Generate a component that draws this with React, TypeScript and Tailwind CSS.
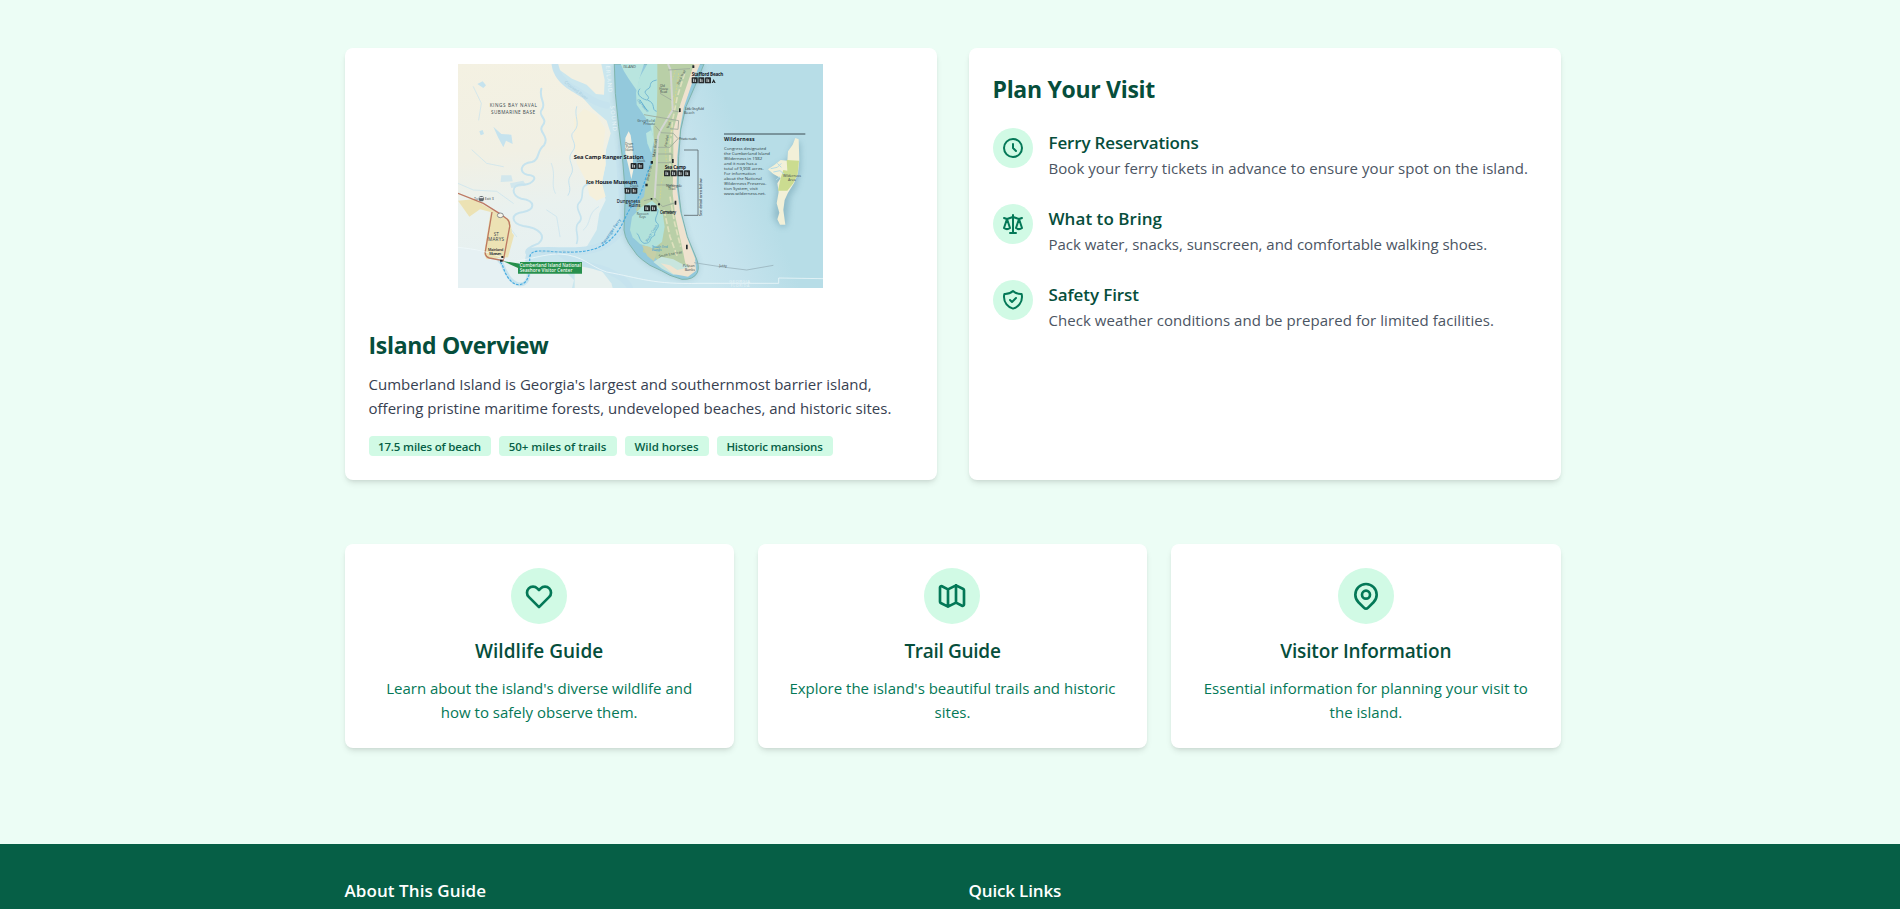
import React from "react";

function Icon({ paths, className }: { paths: string[]; className: string }) {
  return (
    <svg className={className} fill="none" viewBox="0 0 24 24" stroke="currentColor" strokeWidth={2} strokeLinecap="round" strokeLinejoin="round">
      {paths.map((d) => (
        <path key={d} d={d} />
      ))}
    </svg>
  );
}

const CLOCK = ["M12 8v4l3 3m6-3a9 9 0 11-18 0 9 9 0 0118 0z"];
const SCALE = [
  "M3 6l3 1m0 0l-3 9a5.002 5.002 0 006.001 0M6 7l3 9M6 7l6-2m6 2l3-1m-3 1l-3 9a5.002 5.002 0 006.001 0M18 7l3 9m-3-9l-6-2m0-2v2m0 16V5m0 16H9m3 0h3",
];
const SHIELD = [
  "M9 12l2 2 4-4m5.618-4.016A11.955 11.955 0 0112 2.944a11.955 11.955 0 01-8.618 3.04A12.02 12.02 0 003 9c0 5.591 3.824 10.29 9 11.622 5.176-1.332 9-6.03 9-11.622 0-1.042-.133-2.052-.382-3.016z",
];
const HEART = [
  "M4.318 6.318a4.5 4.5 0 000 6.364L12 20.364l7.682-7.682a4.5 4.5 0 00-6.364-6.364L12 7.636l-1.318-1.318a4.5 4.5 0 00-6.364 0z",
];
const MAP = [
  "M9 20l-5.447-2.724A1 1 0 013 16.382V5.618a1 1 0 011.447-.894L9 7m0 13l6-3m-6 3V7m6 10l4.553 2.276A1 1 0 0021 18.382V7.618a1 1 0 00-.553-.894L15 4m0 13V4m0 0L9 7",
];
const PIN = [
  "M17.657 16.657L13.414 20.9a1.998 1.998 0 01-2.827 0l-4.244-4.243a8 8 0 1111.314 0z",
  "M15 11a3 3 0 11-6 0 3 3 0 016 0z",
];

const tips = [
  { title: "Ferry Reservations", titleClass: "tracking-[-0.16px]", text: "Book your ferry tickets in advance to ensure your spot on the island.", textClass: "tracking-[0.055px]", icon: CLOCK },
  { title: "What to Bring", titleClass: "tracking-[0.05px]", text: "Pack water, snacks, sunscreen, and comfortable walking shoes.", textClass: "tracking-[-0.02px]", icon: SCALE },
  { title: "Safety First", titleClass: "tracking-[-0.1px]", text: "Check weather conditions and be prepared for limited facilities.", textClass: "tracking-[0.055px]", icon: SHIELD },
];

const guides = [
  { title: "Wildlife Guide", titleClass: "tracking-[0.05px]", text: "Learn about the island's diverse wildlife and how to safely observe them.", textClass: "px-2", icon: HEART },
  { title: "Trail Guide", titleClass: "tracking-[-0.3px]", text: "Explore the island's beautiful trails and historic sites.", textClass: "", icon: MAP },
  { title: "Visitor Information", titleClass: "tracking-[-0.16px]", text: "Essential information for planning your visit to the island.", textClass: "tracking-[0.035px]", icon: PIN },
];

const tags = [
  { label: "17.5 miles of beach", className: "w-[122px] tracking-[-0.17px]" },
  { label: "50+ miles of trails", className: "w-[118px]" },
  { label: "Wild horses", className: "w-[84px] tracking-[-0.05px]" },
  { label: "Historic mansions", className: "w-[116px] tracking-[-0.2px]" },
];

const facilities: [number, number, number][] = [
  [755, 82, 3],
  [572, 339, 2],
  [672, 361, 4],
  [554, 413, 2],
  [612, 466, 2],
];

const notes = [
  "Congress designated",
  "the Cumberland Island",
  "Wilderness in 1982",
  "and it now has a",
  "total of 9,908 acres.",
  "For information",
  "about the National",
  "Wilderness Preserva-",
  "tion System, visit",
  "www.wilderness.net.",
];

function IslandMap() {
  return (
    <svg className="h-56 w-[365px]" viewBox="54 42 1095 672" preserveAspectRatio="none" fontFamily="Open Sans, Noto Sans, sans-serif">
      <defs>
        <linearGradient id="sea" gradientUnits="userSpaceOnUse" x1="700" y1="420" x2="930" y2="330">
          <stop offset="0" stopColor="#cae6ee" />
          <stop offset="0.35" stopColor="#c6e3ed" />
          <stop offset="1" stopColor="#b7dde7" />
        </linearGradient>
        <linearGradient id="land" x1="0" y1="0" x2="0.1" y2="1">
          <stop offset="0" stopColor="#f4f1e2" />
          <stop offset="0.42" stopColor="#f1f0e4" />
          <stop offset="0.68" stopColor="#e9f1ef" />
          <stop offset="1" stopColor="#e5f0f1" />
        </linearGradient>
        <filter id="soft" x="-20%" y="-20%" width="140%" height="140%">
          <feGaussianBlur stdDeviation="10" />
        </filter>
      </defs>
      <rect x="54" y="42" width="1095" height="672" fill="url(#sea)" />

      {/* mainland */}
      <path d="M54 42H338L372 92L420 134L458 176L500 212L512 250L498 300L497 345L484 400L497 450L478 490L470 540L440 590L390 610L300 604L270 608L264 640L300 655L380 668L402 690L396 714H54Z" fill="url(#land)" />
      <path d="M345 42H484L494 90L492 134L468 132L440 104L396 86L356 58Z" fill="#f2f0e2" />
      <path d="M402 206L432 176L470 196L496 236L490 290L497 342L486 400L497 440L470 452L448 436L440 396L410 340L402 280Z" fill="#f5f0dc" />
      <path d="M54 590L130 602L190 634L214 690L236 714H54Z" fill="#e6f1f3" />
      <path d="M404 656L440 646L486 664L514 700L518 714H404Z" fill="#e8f1ef" />

      {/* creeks and marsh */}
      <g fill="none" stroke="#c6e3ee" strokeLinecap="round" strokeLinejoin="round">
        <path d="M345 44C350 80 376 100 398 114C430 130 460 160 500 166" strokeWidth="20" />
        <path d="M304 116C296 150 320 158 306 178C290 196 326 206 308 226C292 246 330 258 312 286C290 300 300 330 276 336C240 340 236 368 262 374C300 376 280 402 250 404C210 400 214 440 244 446C290 452 284 480 250 486C208 492 214 520 250 528C300 534 320 560 296 580C270 590 250 600 262 614" strokeWidth="6" />
        <path d="M410 170C400 200 424 220 402 244C380 262 420 280 396 306C376 330 410 350 392 376C376 400 400 412 384 436" strokeWidth="3" />
        <path d="M450 400C410 410 440 440 416 460C400 480 440 500 414 520C400 540 420 556 410 580" strokeWidth="5" />
        <path d="M476 470C440 490 456 520 430 540M334 340C350 380 330 400 346 430M100 110L124 160L116 210M96 300L140 340L190 350" strokeWidth="2" />
        <path d="M54 400L100 420L170 424L220 460M320 480L350 500L360 560M230 560L200 520" strokeWidth="2" />
        <path d="M270 606C340 596 420 616 480 590C520 574 540 548 556 520" strokeWidth="24" />
        <path d="M270 606C248 628 276 660 262 690C246 716 214 700 200 670C186 650 190 640 178 632" strokeWidth="11" />
        <path d="M360 610C400 640 440 640 500 660C540 680 560 690 570 714" strokeWidth="18" />
      </g>
      <g fill="#c6e3ee">
        <path d="M112 102l16-8 10 12-8 8zM160 230l24 22 30 2 4 28-20-10-8 20-16-30zM118 244l10-4 4 12-10 4z" />
        <path d="M184 376h30l4 18-36 2zM210 400l40-8 8 14-44 8z" opacity="0.7" />
      </g>

      {/* St Marys */}
      <path d="M54 452L100 448L210 510L216 548L222 556L204 622L140 628L132 612L152 486L120 478L88 500Z" fill="#ece2b4" />
      <g fill="none" stroke="#bd7962" strokeWidth="4">
        <path d="M54 430L130 460L178 490L202 508Q210 516 209 530L190 632L148 624Q134 620 136 604L156 486" />
      </g>
      <ellipse cx="181" cy="496" rx="9" ry="7" fill="#f8f4e8" stroke="#59616a" strokeWidth="2" />
      <circle cx="124" cy="446" r="8" fill="#5f676d" />
      <path d="M118 443h12" stroke="#fff" strokeWidth="3" />

      {/* sound */}
      <path d="M520 42H640V250L580 400L552 560L540 500L528 330L540 250Z" fill="#c6e3ee" />
      <path d="M523 42L526 130L536 230L548 330L556 430L552 540Q554 560 566 580L592 616Q606 630 630 646L664 662L690 676L726 688Q760 690 772 668Q780 648 766 618L742 560L724 490L714 410L716 320L722 240L738 170L764 110L792 42Z" fill="#2b6478" opacity="0.22" filter="url(#soft)" />
      <path d="M523 42L526 130L536 230L548 330L556 430L552 540Q554 560 566 580L592 616Q606 630 630 646L664 662L690 676L726 688Q760 690 772 668Q780 648 766 618L742 560L724 490L714 410L716 320L722 240L738 170L764 110L792 42Z" fill="#93c9dc" stroke="#7fb5ac" strokeWidth="3" />

      {/* island */}
      <path d="M542 42H612L598 86L592 124L566 86L552 64Z" fill="#b9e5df" />
      <path d="M622 42L598 84L588 128L590 164L612 196L632 226L644 290L656 200L664 42Z" fill="#b5e4de" />
      <path d="M652 42L652 120L650 196L640 230L642 300L634 340L618 400L612 440L598 454L588 480L600 500L640 470L668 520L666 570L612 590L608 606L640 618L670 650L720 660L752 664L766 640L744 590L722 510L706 430L704 340L708 240L728 160L754 90L772 42Z" fill="#b9cfa7" />
      <path d="M636 452L604 472L576 500L570 540L578 562L600 582L640 596L666 576L674 530L668 490L650 464Z" fill="#b2e2db" />
      <path d="M618 250L634 240L642 270L634 310L622 280Z" fill="#b9e5df" />
      <path d="M606 586L628 590L650 606L642 634L622 618Z" fill="#c6cfa7" />
      <path d="M640 636L664 620L700 628L722 640L744 648L744 668L700 674L666 656Z" fill="#c8e5de" />
      <path d="M662 640L690 646L712 660L748 652L734 600L742 604L766 632L768 662L744 680L700 672Z" fill="#efe4d0" />
      <path d="M780 42L756 100L732 170L720 236L712 320L710 410L720 484L740 560L766 626L760 660L736 640L724 580L706 500L698 430L700 330L700 240L722 160L746 90L762 42Z" fill="#efe2cf" />
      <path d="M734 70L712 140L698 210L690 290L690 370M690 440L704 520L722 590M672 480L690 560L712 620" fill="none" stroke="#dee0bd" strokeWidth="5" strokeDasharray="18 7" />
      <path d="M706 60L690 110L704 150L684 200L696 240L676 300L680 340L664 400L660 450M716 70L700 180" fill="none" stroke="#d8d787" strokeWidth="2.5" strokeDasharray="5 4" />
      <path d="M566 244L572 256L578 300L580 360L574 388L568 360L556 310L556 264Z" fill="#f1efe2" />

      {/* island creeks */}
      <g fill="none" stroke="#74b8d3" strokeWidth="3">
        <path d="M650 90C620 96 640 110 622 118C600 130 640 140 620 150C602 146 586 130 600 116M622 150C650 160 632 180 650 184M600 150L620 180" />
        <path d="M644 474C668 480 640 500 648 516C668 530 640 540 644 556C622 566 640 580 612 580C596 572 600 556 590 550" />
        <path d="M640 590l20 4M636 600l24 4" strokeWidth="2" />
      </g>

      {/* roads */}
      <g fill="none" strokeLinejoin="round">
        <path d="M684 42L692 60L698 180L662 240L654 260L650 350L644 444" stroke="#d3d6d2" strokeWidth="6" />
        <path d="M612 194L716 212L714 238L690 236M662 248L700 250L714 266L690 292H654M684 60L750 56M698 182L720 186M660 130L694 150M654 312H696V338H654M650 405H700M644 444L668 470L706 458M636 446L612 452M646 228L660 244" stroke="#9ba89a" strokeWidth="2.5" />
        <path d="M732 300H774V496H732" stroke="#5b686c" strokeWidth="2.5" />
        <path d="M762 638L840 650L920 660L1000 646" stroke="#91a9b2" strokeWidth="2" />
        <path d="M54 592C100 596 160 608 190 626C216 650 300 610 360 612C430 616 450 650 500 666C600 684 640 704 780 700L1016 700V684L1149 686" stroke="#f1fafb" strokeWidth="2.5" opacity="0.85" />
      </g>

      {/* ferry route */}
      <path d="M636 338C612 380 612 430 582 460C556 490 550 530 520 560C480 606 420 608 360 606C310 604 276 596 270 618C266 650 276 670 256 696C234 714 214 700 200 676C188 656 190 642 178 634" fill="none" stroke="#45abe0" strokeWidth="3.5" strokeDasharray="8 4" />

      {/* visitor centre label */}
      <path d="M188 633L240 641V636H426V671H234V654Z" fill="#27904d" />
      <g fill="#f0faf2" fontSize="13.5" fontWeight="600">
        <text x="239" y="650" textLength="184">Cumberland Island National</text>
        <text x="239" y="666" textLength="158">Seashore Visitor Center</text>
      </g>

      {/* facility pictograms */}
      {facilities.map(([x, y, n]) => (
        <g key={`${x}-${y}`}>
          {Array.from({ length: n }, (_, i) => (
            <g key={i}>
              <rect x={x + i * 20} y={y} width="18" height="18" rx="2" fill="#272b2d" />
              <path d={`M${x + i * 20 + 6} ${y + 4}v10m5 -8v8`} stroke="#cdd7d8" strokeWidth="3" />
            </g>
          ))}
        </g>
      ))}
      <path d="M815 99l6-12 6 12h-4l-2-4-2 4z" fill="#272b2d" />
      <g fill="#20282b">
        <path d="M632 333h7v8h-7zM616 401h7v8h-7zM180 629h8v6h-8zM184 618h6v6h-6zM757 46h6v8h-6zM717 175h5v11h-5zM696 327h5v12h-5zM704 452h5v12h-5zM738 584h5v14h-5zM654 460h6v6h-6zM632 444h5v5h-5z" />
      </g>

      {/* place names */}
      <g fill="#16212a" fontWeight="700">
        <text x="401" y="327" fontSize="17.5" textLength="210">Sea Camp Ranger Station</text>
        <text x="438" y="402" fontSize="17.5" textLength="154">Ice House Museum</text>
        <text x="674" y="358" fontSize="14" textLength="64">Sea Camp</text>
        <text x="755" y="79" fontSize="14" textLength="95">Stafford Beach</text>
        <text x="852" y="273" fontSize="16" textLength="92">Wilderness</text>
        <g fontSize="13" fontWeight="600">
          <text x="530" y="459" textLength="70">Dungeness</text>
          <text x="566" y="471">Ruins</text>
          <text x="660" y="493" textLength="48">Cemetery</text>
          <text x="144" y="602" fontSize="11" textLength="46">Mainland</text>
          <text x="148" y="614" fontSize="11" textLength="36">Museum</text>
        </g>
      </g>
      <g fill="#39474d">
        <g fontSize="14" fontWeight="500">
          <text x="149" y="171" textLength="142">KINGS BAY NAVAL</text>
          <text x="153" y="192" textLength="132">SUBMARINE BASE</text>
          <text x="161" y="557">ST</text>
          <text x="144" y="573" textLength="48">MARYS</text>
        </g>
        <g fontSize="11">
          <text x="592" y="216" textLength="52">Greyfield</text>
          <text x="610" y="226">Private</text>
          <text x="590" y="337">Dock</text>
          <text x="570" y="412">Dock</text>
          <text x="550" y="55">ISLAND</text>
          <text x="736" y="181" textLength="56">Little Greyfield</text>
          <text x="732" y="191">Beach</text>
          <text x="716" y="270" textLength="54">Private roads</text>
          <text x="678" y="410" textLength="48">Nightingale</text>
          <text x="684" y="419">Trail</text>
          <text x="102" y="450">To</text>
          <text x="134" y="450">Exit 3</text>
          <text x="728" y="652">Pelican</text>
          <text x="734" y="662">Banks</text>
          <text x="838" y="651">Jetty</text>
        </g>
        <g fontSize="9">
          <text x="660" y="110">Old</text>
          <text x="658" y="120">House</text>
          <text x="660" y="129">Road</text>
          <text x="556" y="284">Drum</text>
          <text x="558" y="293">Point</text>
          <text x="556" y="303">Island</text>
          <text x="590" y="494">Raccoon</text>
          <text x="598" y="503">Keys</text>
        </g>
        <text fontSize="11" transform="translate(645 322) rotate(-83)">Main Road</text>
        <text fontSize="10" transform="translate(626 392) rotate(-78)">River Trail</text>
        <text fontSize="10" transform="translate(680 290) rotate(-80)">Parallel</text>
        <text fontSize="10" transform="translate(686 236) rotate(-70)">Trail</text>
        <text fontSize="10" transform="translate(716 104) rotate(-62)">Duck Trail</text>
        <text fontSize="11" fontWeight="600" transform="translate(786 498) rotate(-90)">See detail area below</text>
        <text fontSize="10" transform="translate(657 622) rotate(-10)">South End Trail</text>
      </g>
      <g fill="#3d95c8" fontSize="12">
        <text fontWeight="600" transform="translate(490 586) rotate(-55)">Passenger Ferry</text>
        <text fontSize="10" x="636" y="594">South End</text>
        <text fontSize="10" x="636" y="604">Ponds</text>
        <text fontSize="10" transform="translate(622 576) rotate(-58)">Beach Creek</text>
        <text fontSize="10" transform="translate(590 150) rotate(50)">Old House</text>
      </g>
      <g fill="#e8f5f8" fontSize="17">
        <text letterSpacing="3" transform="translate(497 48) rotate(84)">ERLAND</text>
        <text letterSpacing="4" transform="translate(511 168) rotate(84)">SOUND</text>
        <text fontSize="13" x="868" y="699" textLength="62">GEORGIA</text>
        <text fontSize="11" x="872" y="711" textLength="56">FLORIDA</text>
        <text fontSize="13" fill="#b3d3e2" x="302" y="608" textLength="98">St Marys River</text>
        <text fontSize="13" fill="#a8cddd" transform="translate(372 98) rotate(38)">Crooked River</text>
      </g>

      {/* wilderness inset */}
      <path d="M852 252H1096" stroke="#3d4c52" strokeWidth="3" />
      {notes.map((line, i) => (
        <text key={line} x="852" y={301 + i * 14.8} fontSize="13" fill="#2a3b42">
          {line}
        </text>
      ))}
      <path d="M1066 270L1080 280L1082 350L1070 410L1050 440L1040 530L1020 530L1000 500L1010 420L990 360L1040 330Z" fill="#4a7f92" opacity="0.35" filter="url(#soft)" />
      <path d="M1066 264L1076 268L1078 330L1074 370L1062 400L1044 428L1034 450L1030 480L1036 524L1020 524L1012 508L1018 488L1010 460L1016 426L1012 400L1022 384L1000 372L984 358L1004 344L1022 330L1042 332L1044 304L1058 284Z" fill="#f2f0d8" />
      <path d="M1040 330L1077 332L1073 372L1060 400L1042 422L1014 422L1022 384L1030 360L1042 362Z" fill="#cbdc90" />
      <path d="M992 356L1012 352L1024 340M1000 366L1020 362L1032 372M1012 340L1024 352M1008 390L1020 380" fill="none" stroke="#b5dce6" strokeWidth="3" />
      <text x="1029" y="382" fontSize="11" fill="#39474d" textLength="54">Wilderness</text>
      <text x="1044" y="394" fontSize="11" fill="#39474d">Area</text>
    </svg>
  );
}

export default function App() {
  return (
    <div className="h-[909px] overflow-hidden bg-[#ecfdf5] font-['Open_Sans','Noto_Sans',sans-serif]">
      <main className="ml-[344.5px] h-[844px] w-[1216px] pt-12">
        <div className="mb-16 grid grid-cols-2 gap-8">
          <section className="overflow-hidden rounded-lg bg-white shadow-md">
            <div className="flex h-64 items-center justify-center p-4">
              <IslandMap />
            </div>
            <div className="p-6">
              <h2 className="mb-[11px] pt-px text-[23px] leading-8 font-bold tracking-[-0.3px] text-[#064e3b]">Island Overview</h2>
              <p className="mb-4 text-[15px] leading-6 tracking-[0.01px] text-[#374151]">
                Cumberland Island is Georgia's largest and southernmost barrier island, offering pristine maritime forests, undeveloped beaches, and historic sites.
              </p>
              <div className="flex gap-2">
                {tags.map((tag) => (
                  <span key={tag.label} className={`h-5 rounded bg-[#d1fae5] text-center text-[11.5px] leading-[21px] font-semibold whitespace-nowrap text-[#065f46] ${tag.className}`}>
                    {tag.label}
                  </span>
                ))}
              </div>
            </div>
          </section>

          <section className="rounded-lg bg-white p-6 shadow-md">
            <h2 className="mb-[23px] pt-px text-[23px] leading-8 font-bold tracking-[-0.3px] text-[#064e3b]">Plan Your Visit</h2>
            <ul className="space-y-6">
              {tips.map((tip) => (
                <li key={tip.title} className="flex items-start">
                  <div className="mr-4 rounded-full bg-[#d1fae5] p-2 text-[#047857]">
                    <Icon paths={tip.icon} className="size-6" />
                  </div>
                  <div>
                    <h3 className={`-mb-px pt-px text-[17px] leading-7 font-semibold text-[#064e3b] ${tip.titleClass}`}>{tip.title}</h3>
                    <p className={`text-[15px] leading-6 text-[#4b5563] ${tip.textClass}`}>{tip.text}</p>
                  </div>
                </li>
              ))}
            </ul>
          </section>
        </div>

        <div className="grid grid-cols-3 gap-6">
          {guides.map((guide) => (
            <a key={guide.title} className="flex flex-col items-center rounded-lg bg-white p-6 text-center shadow-md">
              <div className="mb-3 rounded-full bg-[#d1fae5] p-3 text-[#047857]">
                <Icon paths={guide.icon} className="size-8" />
              </div>
              <h3 className={`mb-[11px] pt-px text-[19px] leading-7 font-semibold text-[#064e3b] ${guide.titleClass}`}>{guide.title}</h3>
              <p className={`text-[15px] leading-6 text-[#047857] ${guide.textClass}`}>{guide.text}</p>
            </a>
          ))}
        </div>
      </main>

      <footer className="h-[65px] bg-[#065f46] pt-[33px] text-white">
        <div className="ml-[344.5px] grid w-[1216px] grid-cols-2 gap-8">
          <h3 className="text-[17px] leading-7 font-semibold tracking-[0.08px]">About This Guide</h3>
          <h3 className="text-[17px] leading-7 font-semibold tracking-[-0.15px]">Quick Links</h3>
        </div>
      </footer>
    </div>
  );
}
